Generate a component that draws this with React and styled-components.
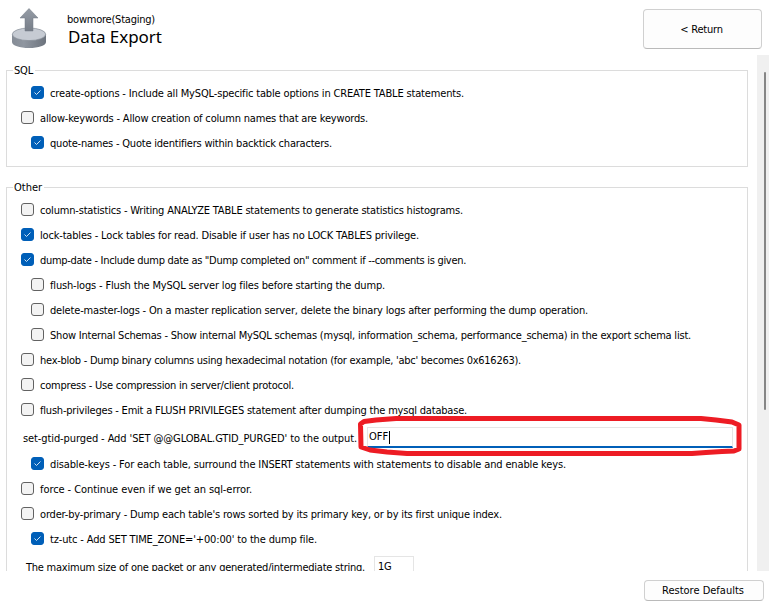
import React from 'react';
import styled, { createGlobalStyle } from 'styled-components';

const GlobalStyle = createGlobalStyle`
  *, *::before, *::after { box-sizing: border-box; }
  body {
    margin: 0;
    background: #fff;
    color: #000;
    font-family: "DejaVu Sans Condensed", "DejaVu Sans", sans-serif;
    font-size: 11px;
    line-height: 14px;
  }
`;

const Page = styled.main`
  display: flex;
  flex-direction: column;
  width: 769px;
  height: 605px;
  overflow: hidden;
`;

const Header = styled.header`
  display: flex;
  align-items: flex-start;
  height: 55px;
  padding: 9px 7px 0 11px;
`;

const HeaderIcon = styled.svg`
  width: 36px;
  height: 41px;
  margin-top: -1px;
  flex: none;
`;

const Titles = styled.div`
  flex: 1;
  padding: 4px 0 0 20px;
`;

const Label = styled.span`
  white-space: pre;
  letter-spacing: ${(p) => p.$tracking || 0}px;
`;

const Title = styled.h1`
  margin: -1px 0 0 1px;
  font-family: "Noto Sans", sans-serif;
  font-size: 17px;
  font-weight: 400;
  line-height: 22px;
  letter-spacing: -0.05px;
`;

const Button = styled.button`
  display: flex;
  align-items: center;
  justify-content: center;
  flex: none;
  width: ${(p) => p.$width}px;
  height: ${(p) => p.$height}px;
  padding: 1px 2px 0 0;
  border: 1px solid #d0d0d0;
  border-bottom-color: #bababa;
  border-radius: 4px;
  background: #fdfdfd;
  color: #000;
  font: inherit;
`;

const ScrollArea = styled.div`
  display: flex;
  height: 516px;
  overflow: hidden;
`;

const Content = styled.div`
  flex: 1;
  min-width: 0;
  padding: 15px 9px 0 6px;
`;

const Scrollbar = styled.div`
  width: 12px;
  padding: 17px 0 0 7px;
  background: #f0f0f0;
`;

const Thumb = styled.div`
  width: 2px;
  height: 338px;
  border-radius: 1px;
  background: #868686;
`;

const Group = styled.section`
  height: ${(p) => p.$height}px;
  margin-bottom: 20px;
  padding: 0 14px;
  border: 1px solid #dcdcdc;
`;

const Legend = styled.h2`
  width: fit-content;
  height: 14px;
  margin: -7px 0 2px -8px;
  padding: 0 2px 0 1px;
  background: #fff;
  font-size: 11px;
  font-weight: 400;
`;

const Row = styled.label`
  display: flex;
  align-items: center;
  gap: 6px;
  height: 25px;
  padding-left: ${(p) => (p.$indent ? 10 : 0)}px;
`;

const OptionLabel = styled(Label)`
  padding-top: 2px;
`;

const Box = styled.span`
  display: flex;
  flex: none;
  width: 13px;
  height: 13px;
  border: 1px solid ${(p) => (p.$checked ? '#005fb8' : '#626262')};
  border-radius: 3px;
  background: ${(p) => (p.$checked ? '#005fb8' : '#f3f3f3')};
`;

const FieldRow = styled.div`
  display: flex;
  align-items: flex-start;
  position: relative;
  height: 29px;
  padding: 5px 0 0 2px;
`;

const FieldLabel = styled(Label)`
  width: 344px;
  padding-top: 5px;
`;

const Input = styled.div`
  display: flex;
  align-items: center;
  width: 366px;
  height: 21px;
  padding-left: 1px;
  border: 1px solid #e5e5e5;
  border-bottom: 2px solid #005fb8;
`;

const Caret = styled.span`
  width: 1px;
  height: 13px;
  margin-left: 1px;
  background: #000;
`;

const PacketRow = styled.div`
  display: flex;
  padding: 5px 0 0 5px;
`;

const PacketLabel = styled(Label)`
  width: 348px;
  padding-top: 5px;
`;

const PacketInput = styled.div`
  width: 40px;
  height: 22px;
  padding: 3px 0 0 3px;
  border: 1px solid #e5e5e5;
`;

const Highlight = styled.svg`
  position: absolute;
  left: 336px;
  top: -7px;
  width: 386px;
  height: 43px;
  pointer-events: none;
`;

const Footer = styled.footer`
  display: flex;
  justify-content: flex-end;
  padding: 9px 5px 0 0;
`;

const sqlOptions = [
  { text: 'create-options - Include all MySQL-specific table options in CREATE TABLE statements.', checked: true, indent: true, tracking: -0.159 },
  { text: 'allow-keywords - Allow creation of column names that are keywords.', tracking: -0.179 },
  { text: 'quote-names - Quote identifiers within backtick characters.', checked: true, indent: true, tracking: -0.212 },
];

const otherOptions = [
  { text: 'column-statistics - Writing ANALYZE TABLE statements to generate statistics histograms.', tracking: -0.187 },
  { text: 'lock-tables - Lock tables for read. Disable if user has no LOCK TABLES privilege.', checked: true, tracking: -0.179 },
  { text: 'dump-date - Include dump date as "Dump completed on" comment if --comments is given.', checked: true, tracking: -0.303 },
  { text: 'flush-logs - Flush the MySQL server log files before starting the dump.', indent: true, tracking: -0.168 },
  { text: 'delete-master-logs - On a master replication server, delete the binary logs after performing the dump operation.', indent: true, tracking: -0.175 },
  { text: 'Show Internal Schemas - Show internal MySQL schemas (mysql, information_schema, performance_schema) in the export schema list.', indent: true, tracking: -0.214 },
  { text: "hex-blob - Dump binary columns using hexadecimal notation (for example, 'abc' becomes 0x616263).", tracking: -0.262 },
  { text: 'compress - Use compression in server/client protocol.', tracking: -0.22 },
  { text: 'flush-privileges - Emit a FLUSH PRIVILEGES statement after dumping the mysql database.', tracking: -0.203 },
];

const trailingOptions = [
  { text: 'disable-keys - For each table, surround the INSERT statements with statements to disable and enable keys.', checked: true, indent: true, tracking: -0.144 },
  { text: 'force - Continue even if we get an sql-error.', tracking: -0.072 },
  { text: "order-by-primary - Dump each table's rows sorted by its primary key, or by its first unique index.", tracking: -0.176 },
  { text: "tz-utc - Add SET TIME_ZONE='+00:00' to the dump file.", checked: true, indent: true, tracking: -0.151 },
];

function Option({ text, checked, indent, tracking }) {
  return (
    <Row $indent={indent}>
      <Box $checked={checked}>
        {checked && (
          <svg width="11" height="11" viewBox="0 0 11 11">
            <path d="M2.5 5.5 4.5 7.5 8.5 3.5" fill="none" stroke="#cfe3f5" strokeWidth="1" />
          </svg>
        )}
      </Box>
      <OptionLabel $tracking={tracking}>{text}</OptionLabel>
    </Row>
  );
}

function ExportIcon() {
  return (
    <HeaderIcon viewBox="0 0 36 41">
      <defs>
        <linearGradient id="side" x1="0" x2="1">
          <stop offset="0" stopColor="#858c96" />
          <stop offset="0.35" stopColor="#8f96a0" />
          <stop offset="1" stopColor="#6c737d" />
        </linearGradient>
        <linearGradient id="arrow" x1="0" x2="0" y1="0" y2="1">
          <stop offset="0" stopColor="#959ca6" />
          <stop offset="1" stopColor="#777e88" />
        </linearGradient>
      </defs>
      <path d="M1 26v8c0 3.600 7.500 6 17 6s17-2.400 17-6v-8z" fill="url(#side)" />
      <ellipse cx="18" cy="26.300" rx="16.700" ry="6.300" fill="#c6cbd3" stroke="#858c96" strokeWidth="0.700" />
      <path d="M18 .5 27 10h-5v13h-8V10H9z" fill="url(#arrow)" stroke="#737a84" strokeWidth="0.500" />
    </HeaderIcon>
  );
}

export default function App() {
  return (
    <Page>
      <GlobalStyle />
      <Header>
        <ExportIcon />
        <Titles>
          <Label $tracking={-0.225}>bowmore(Staging)</Label>
          <Title>Data Export</Title>
        </Titles>
        <Button $width={119} $height={40}>
          <Label $tracking={-0.2}>{'< Return'}</Label>
        </Button>
      </Header>
      <ScrollArea>
        <Content>
          <Group $height={97}>
            <Legend>
              <Label $tracking={-0.198}>SQL</Label>
            </Legend>
            {sqlOptions.map((o) => <Option key={o.text} {...o} />)}
          </Group>
          <Group $height={440}>
            <Legend>
              <Label>Other</Label>
            </Legend>
            {otherOptions.map((o) => <Option key={o.text} {...o} />)}
            <FieldRow>
              <FieldLabel $tracking={-0.099}>set-gtid-purged - Add 'SET @@GLOBAL.GTID_PURGED' to the output.</FieldLabel>
              <Input>
                <Label>OFF</Label>
                <Caret />
              </Input>
              <Highlight viewBox="358 415 386 43">
                <path
                  d="M361.500 424 365 421.500 377 420 397 418.500H702L717 420 733 422 740 425V449L735 451 723 451.500 707 452.500 693 453.500H408L388 452 371 450 362 447Z"
                  fill="none"
                  stroke="#ed1c24"
                  strokeWidth="5"
                  strokeLinejoin="round"
                />
              </Highlight>
            </FieldRow>
            {trailingOptions.map((o) => <Option key={o.text} {...o} />)}
            <PacketRow>
              <PacketLabel $tracking={-0.232}>The maximum size of one packet or any generated/intermediate string.</PacketLabel>
              <PacketInput>
                <Label $tracking={-0.4}>1G</Label>
              </PacketInput>
            </PacketRow>
          </Group>
        </Content>
        <Scrollbar>
          <Thumb />
        </Scrollbar>
      </ScrollArea>
      <Footer>
        <Button $width={120} $height={21}>
          <Label>Restore Defaults</Label>
        </Button>
      </Footer>
    </Page>
  );
}
